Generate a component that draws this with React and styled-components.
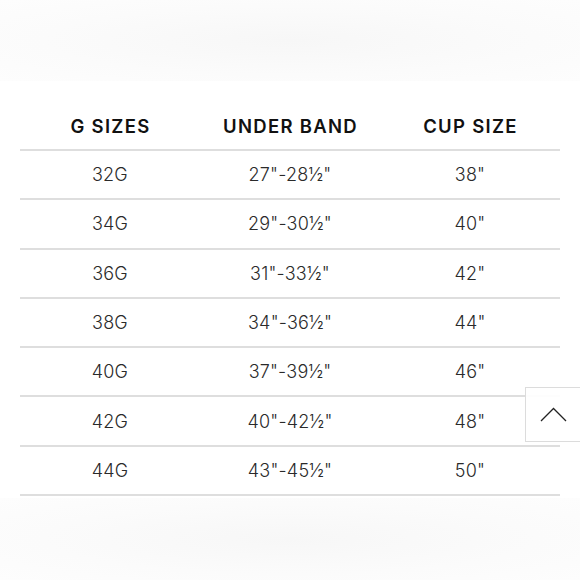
import React from "react";
import styled, { createGlobalStyle } from "styled-components";

const Global = createGlobalStyle`
  html, body { margin: 0; padding: 0; background: #fff; }
  body { font-family: "Inter", "Noto Sans", sans-serif; color: #222; }
`;

const Page = styled.div`
  width: 580px;
  height: 580px;
  display: flex;
  flex-direction: column;
  background: #fafafa;
  position: relative;
  overflow: hidden;
`;

const Band = styled.div`
  height: ${(p) => p.$h}px;
  background: radial-gradient(ellipse at 50% 50%, #f7f7f7 0%, #fbfbfb 60%, #fdfdfd 100%);
  flex: ${(p) => (p.$grow ? 1 : "none")};
`;

const Sheet = styled.section`
  background: #fff;
  padding: 21px 20px 2px;
`;

const Table = styled.div`
  display: flex;
  flex-direction: column;
`;

const Row = styled.div`
  display: grid;
  grid-template-columns: repeat(3, 1fr);
  align-items: center;
  height: ${(p) => p.$h}px;
  border-bottom: 2px solid #dedede;
`;

const Cell = styled.div`
  text-align: center;
  font-size: ${(p) => (p.$head ? 18.5 : 18)}px;
  font-weight: ${(p) => (p.$head ? 600 : 300)};
  color: ${(p) => (p.$head ? "#111" : "#2a2a2a")};
  letter-spacing: ${(p) => (p.$head ? "1.3px" : "0.2px")};
  padding-left: ${(p) => (p.$head ? "1px" : "0")};
`;

const TopButton = styled.button`
  position: absolute;
  left: 525px;
  top: 387px;
  width: 62px;
  height: 55px;
  margin: 0;
  background: rgba(255, 255, 255, 0.92);
  border: 1px solid #dcdcdc;
  display: flex;
  align-items: center;
  justify-content: flex-start;
  padding: 0 0 0 14px;
  cursor: pointer;
`;

const rows = [
  ["32G", "27\"-28½\"", "38\""],
  ["34G", "29\"-30½\"", "40\""],
  ["36G", "31\"-33½\"", "42\""],
  ["38G", "34\"-36½\"", "44\""],
  ["40G", "37\"-39½\"", "46\""],
  ["42G", "40\"-42½\"", "48\""],
  ["44G", "43\"-45½\"", "50\""],
];

export default function App() {
  return (
    <>
      <Global />
      <Page>
        <Band $h={81} />
        <Sheet>
          <Table>
            <Row $h={47}>
              <Cell $head>G SIZES</Cell>
              <Cell $head>UNDER BAND</Cell>
              <Cell $head>CUP SIZE</Cell>
            </Row>
            {rows.map((r) => (
              <Row key={r[0]} $h={47.3}>
                {r.map((c, i) => (
                  <Cell key={i}>{c}</Cell>
                ))}
              </Row>
            ))}
          </Table>
        </Sheet>
        <Band $grow />
        <TopButton aria-label="Back to top">
          <svg width="27" height="15" viewBox="0 0 27 15">
            <path d="M1 14 L13.5 1.5 L26 14" fill="none" stroke="#222" strokeWidth="1.3" />
          </svg>
        </TopButton>
      </Page>
    </>
  );
}
